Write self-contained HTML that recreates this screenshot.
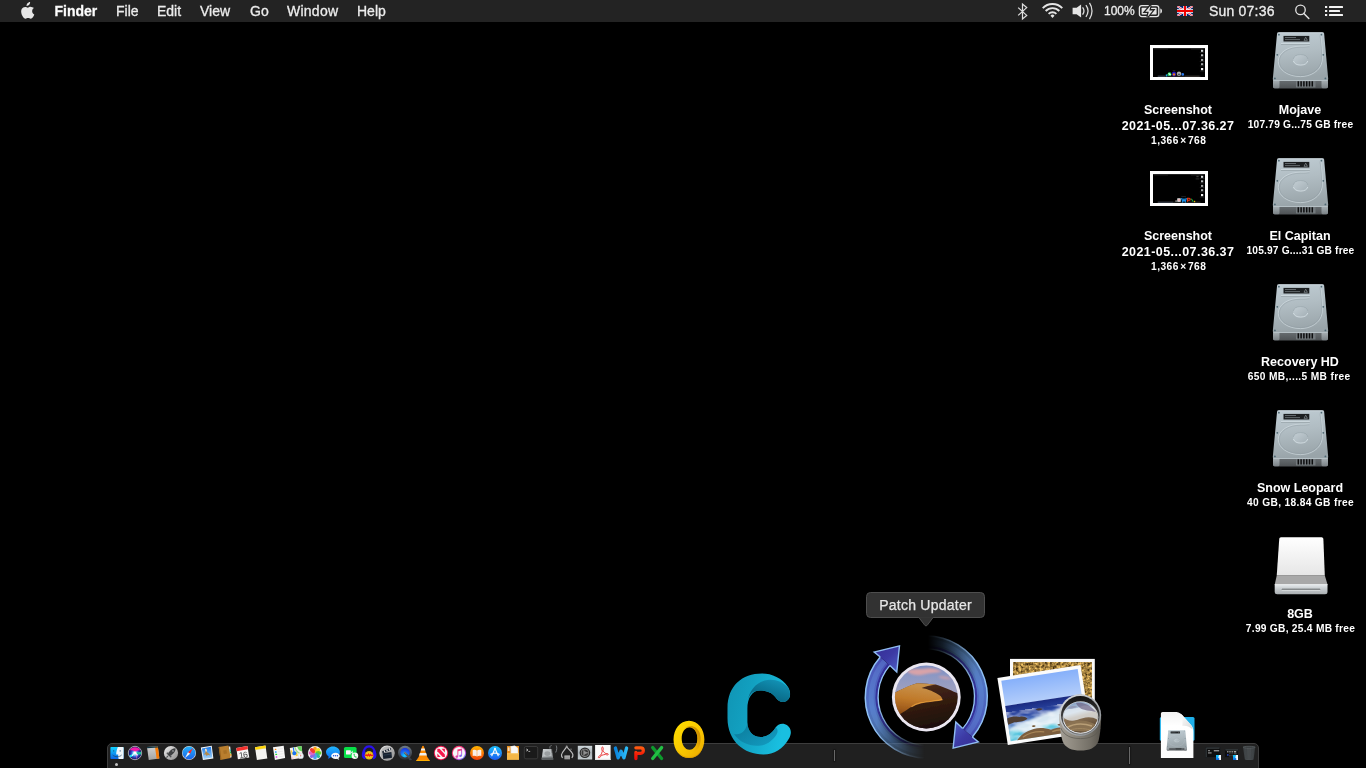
<!DOCTYPE html>
<html>
<head>
<meta charset="utf-8">
<title>Desktop</title>
<style>
*{margin:0;padding:0;box-sizing:border-box}
html,body{width:1366px;height:768px;overflow:hidden;background:#000}
body{position:relative;font-family:"Liberation Sans",sans-serif;color:#fff}
#root{position:absolute;left:0;top:0;width:1366px;height:768px;will-change:transform}
.abs{position:absolute}
#menubar{position:absolute;left:0;top:0;width:1366px;height:22px;background:#232323}
#menubar .mi{position:absolute;top:1px;height:22px;line-height:21px;font-size:14px;color:#ececec;white-space:nowrap;-webkit-text-stroke:0.300px #ececec}
#menubar .b{font-weight:bold}
.lbl{position:absolute;width:140px;text-align:center;font-weight:bold;color:#fff;white-space:nowrap}
.l1{font-size:12.5px;line-height:16px}
.l2{font-size:10.2px;line-height:14px}
.thumb{position:absolute;width:58px;height:35px;background:#000;border:3px solid #fff}
#dock{position:absolute;left:107px;top:743px;width:1152px;height:30px;background:#202020;border:1px solid #3d3d3d;border-radius:5px 5px 0 0}
.sep{position:absolute;width:1px;background:#686868;box-shadow:0 0 1px 1px #181818}
</style>
</head>
<body>
<div id="root">

<!-- ===== MENU BAR ===== -->
<div id="menubar">
  <svg class="abs" style="left:19.4px;top:1.8px" width="16.200" height="18" viewBox="0 0 15 16.800"><path fill="#e6e6e6" d="M10.3 0c.1 1-.3 1.9-.9 2.600-.6.700-1.500 1.200-2.400 1.100-.1-.900.400-1.900.900-2.500C8.500.500 9.500.050 10.300 0zM13.900 5.700c-.100.100-1.700 1-1.700 2.900 0 2.300 2 3 2 3.100 0 .050-.300 1.100-1 2.100-.600.900-1.300 1.800-2.300 1.800s-1.300-.600-2.400-.600c-1.200 0-1.500.600-2.500.650-1 .050-1.800-1-2.400-1.900C2.300 11.900 1.300 8.600 2.600 6.400c.600-1.100 1.800-1.800 3-1.800 1 0 1.900.650 2.500.650.600 0 1.700-.800 2.900-.700.500 0 1.900.200 2.900 1.150z"/></svg>
  <span class="mi b" style="left:54.500px;color:#fff">Finder</span>
  <span class="mi" style="left:116px">File</span>
  <span class="mi" style="left:157px">Edit</span>
  <span class="mi" style="left:200px">View</span>
  <span class="mi" style="left:250px">Go</span>
  <span class="mi" style="left:287px;letter-spacing:0.250px">Window</span>
  <span class="mi" style="left:357px">Help</span>
  <!-- bluetooth -->
  <svg class="abs" style="left:1014px;top:0" width="18" height="22" viewBox="0 0 18 22"><path fill="none" stroke="#dedede" stroke-width="1.25" stroke-linejoin="miter" d="M4.2 7.6L12.7 15.4L8.5 19V4L12.7 7.6L4.2 15.4"/></svg>
  <!-- wifi -->
  <svg class="abs" style="left:1040px;top:0" width="26" height="22" viewBox="0 0 26 22"><path fill="none" stroke="#e4e4e4" stroke-width="1.9" d="M2.72 8.15A13.6 13.6 0 0 1 22.28 8.15 M5.67 11.00A9.5 9.5 0 0 1 19.33 11.00 M8.62 13.85A5.4 5.4 0 0 1 16.38 13.85"/><path fill="#e4e4e4" d="M12.5 18.0L10.49 15.65A2.8 2.8 0 0 1 14.51 15.65Z"/></svg>
  <!-- volume -->
  <svg class="abs" style="left:1070px;top:0" width="26" height="22" viewBox="0 0 26 22"><path fill="#e4e4e4" d="M2.6 7.7H6.6L11.1 4.4V17.5L6.6 14.3H2.6Z"/><path fill="none" stroke="#dcdcdc" stroke-width="1.3" d="M12.57 7.43A5.8 5.8 0 0 1 12.57 14.57 M15.93 5.24A9.8 9.8 0 0 1 15.93 16.76 M19.47 2.97A14 14 0 0 1 19.47 19.03"/></svg>
  <span class="mi" style="left:1104px;font-size:12px;top:1px">100%</span>
  <!-- battery -->
  <svg class="abs" style="left:1137px;top:0" width="28" height="22" viewBox="0 0 28 22"><rect x="2.4" y="5.6" width="19.4" height="11" rx="2.4" fill="none" stroke="#e4e4e4" stroke-width="1.3"/><rect x="4.6" y="7.8" width="15" height="6.6" rx="0.6" fill="#e4e4e4"/><path fill="#e4e4e4" d="M23.3 8.6c1 .2 1.700 1.200 1.700 2.500s-.700 2.300-1.700 2.500z"/><path fill="#232323" stroke="#232323" stroke-width="2.6" stroke-linejoin="miter" d="M13.6 5.400L8.300 11.800H11.800L10.500 16.900L15.800 10.400H12.300Z"/><path fill="#e4e4e4" d="M13.6 5.400L8.300 11.800H11.800L10.500 16.900L15.800 10.400H12.300Z"/></svg>
  <!-- flag -->
  <svg class="abs" style="left:1177px;top:6px" width="16" height="10" viewBox="0 0 32 20"><rect width="32" height="20" fill="#012169"/><path d="M0 0L32 20M32 0L0 20" stroke="#fff" stroke-width="4.200"/><path d="M0 0L32 20M32 0L0 20" stroke="#e8112d" stroke-width="1.600"/><path d="M16 0V20M0 10H32" stroke="#fff" stroke-width="7"/><path d="M16 0V20M0 10H32" stroke="#f00000" stroke-width="4.200"/></svg>
  <span class="mi" style="left:1209px;letter-spacing:0.2px">Sun 07:36</span>
  <!-- spotlight -->
  <svg class="abs" style="left:1292px;top:0" width="20" height="22" viewBox="0 0 20 22"><circle cx="8.500" cy="9.900" r="4.750" fill="none" stroke="#e0e0e0" stroke-width="1.350"/><path d="M11.900 13.400L16.800 18.500" stroke="#e0e0e0" stroke-width="1.500" stroke-linecap="round"/></svg>
  <!-- notification center -->
  <svg class="abs" style="left:1322px;top:0" width="24" height="22" viewBox="0 0 24 22"><g fill="#f2f2f2"><rect x="3" y="6" width="2.200" height="2"/><rect x="3" y="10" width="2.200" height="2"/><rect x="3" y="14" width="2.200" height="2"/><rect x="7" y="6" width="14" height="2" rx=".5"/><rect x="7" y="10" width="11" height="2" rx=".5"/><rect x="7" y="14" width="14" height="2" rx=".5"/></g></svg>
</div>


<!-- ===== SVG SYMBOLS ===== -->
<svg width="0" height="0" style="position:absolute">
<defs>
  <linearGradient id="hg1" x1="0" y1="0" x2="0.150" y2="1"><stop offset="0" stop-color="#bfccd3"/><stop offset="0.450" stop-color="#b1bdc3"/><stop offset="1" stop-color="#99a4a9"/></linearGradient>
  <linearGradient id="hg2" x1="0" y1="0" x2="0" y2="1"><stop offset="0" stop-color="#6c7276"/><stop offset="1" stop-color="#4e5255"/></linearGradient>
  <linearGradient id="hg3" x1="0" y1="0" x2="0" y2="1"><stop offset="0" stop-color="#a9b1b5"/><stop offset="1" stop-color="#7b8286"/></linearGradient>
  <linearGradient id="hg4" x1="0" y1="0" x2="1" y2="1"><stop offset="0" stop-color="#c3ced4"/><stop offset="1" stop-color="#a3afb5"/></linearGradient>
  <linearGradient id="xg1" x1="0" y1="0" x2="0" y2="1"><stop offset="0" stop-color="#ffffff"/><stop offset="1" stop-color="#e6e6e6"/></linearGradient>
  <linearGradient id="xg2" x1="0" y1="0" x2="0" y2="1"><stop offset="0" stop-color="#e9edef"/><stop offset="0.500" stop-color="#c5cacd"/><stop offset="1" stop-color="#a9aeb1"/></linearGradient>
  <symbol id="hdd" viewBox="0 0 64 64">
    <path d="M5 51H60V58.600Q60 60.400 58.200 60.400H6.800Q5 60.400 5 58.600Z" fill="url(#hg2)"/>
    <rect x="5" y="52" width="6.500" height="8.200" rx="1.500" fill="url(#hg3)"/>
    <rect x="53.500" y="52" width="6.500" height="8.200" rx="1.500" fill="url(#hg3)"/>
    <rect x="28" y="53" width="19.500" height="6.400" fill="#747a7e"/>
    <path d="M30.300 53.300V58.600M33.100 53.300V58.600M35.900 53.300V58.600M38.700 53.300V58.600M41.500 53.300V58.600M44.300 53.300V58.600" stroke="#0d0e0f" stroke-width="1.500"/>
    <path d="M10.600 4.300H54.600Q56 4.300 56.150 5.700L60.200 51Q60.350 53 58.500 53H6.500Q4.650 53 4.800 51L9.050 5.700Q9.200 4.300 10.600 4.300Z" fill="url(#hg1)"/>
    <path d="M10.600 4.800H54.600" stroke="#d6e1e6" stroke-width="0.800" opacity="0.800"/>
    <path d="M5.200 52.500H59.800" stroke="#c5d0d5" stroke-width="0.900" opacity="0.700"/>
    <rect x="15.500" y="7.900" width="25.800" height="5.600" fill="#1c1f21"/>
    <path d="M17 9.500H28M17 11.600H32" stroke="#7f878b" stroke-width="0.700"/>
    <path d="M36 12.300L37.700 9.200L39.400 12.300Z" fill="none" stroke="#9aa2a6" stroke-width="0.600"/>
    <path d="M13 15.700H41.800" stroke="#d4dfe4" stroke-width="0.900"/>
    <path d="M13 16.500H41.800" stroke="#8e9aa0" stroke-width="0.600"/>
    <path d="M52.600 6.500C53.600 14 55 26 54.200 33C52.500 43.500 42 48.600 32.600 48.600C20 48.600 10.300 42 10.300 33.300C10.300 24.500 20 18.200 32.600 18.200C35.500 18.200 38.500 18.300 41.500 17.800" fill="none" stroke="#d3dee3" stroke-width="0.900" opacity="0.700"/>
    <path d="M52 7.500C53 15 54.200 26 53.400 32.500C51.700 42.500 41.500 47.600 32.600 47.600C20.700 47.600 11.300 41.500 11.300 33.300C11.300 25.200 20.700 19.200 32.600 19.200C35.500 19.200 38.500 19.200 41.500 18.700" fill="none" stroke="#8f9ba1" stroke-width="0.600" opacity="0.700"/>
    <ellipse cx="32.600" cy="31.900" rx="7.400" ry="5.300" fill="url(#hg4)"/>
    <path d="M25.400 33A7.400 5.300 0 0 0 39.800 33" fill="none" stroke="#d9e3e8" stroke-width="0.800"/>
    <path d="M25.300 31A7.400 5.300 0 0 1 39.900 31" fill="none" stroke="#93a0a6" stroke-width="0.500"/>
    <g fill="#4d6772"><circle cx="10.900" cy="6.700" r="0.900"/><circle cx="53.400" cy="6.700" r="0.900"/><circle cx="9.300" cy="26.800" r="0.900"/><circle cx="55.300" cy="26.800" r="0.900"/><circle cx="6.900" cy="50.400" r="0.900"/><circle cx="57.400" cy="50.400" r="0.900"/></g>
  </symbol>
  <symbol id="xdrv" viewBox="0 0 64 64">
    <path d="M6.700 52H59.500V59.800Q59.500 62.300 57 62.300H9.200Q6.700 62.300 6.700 59.800Z" fill="url(#xg2)"/>
    <path d="M14.200 57.300H51.800" stroke="#4f5355" stroke-width="1.100" stroke-linecap="round"/>
    <path d="M14.200 58.200H51.800" stroke="#f4f6f7" stroke-width="0.600" stroke-linecap="round"/>
    <path d="M8.800 43.300H56.750L59.500 52.500H6.750Z" fill="#a8a8a8"/>
    <path d="M13 5.200H53.600Q55.200 5.200 55.350 6.800L56.800 43.300H8.750L11.250 6.800Q11.400 5.200 13 5.200Z" fill="url(#xg1)"/>
    <path d="M6.900 52.600H59.300" stroke="#f2f4f5" stroke-width="0.800"/>
  </symbol>
</defs>
</svg>

<!-- ===== DESKTOP ICONS ===== -->
<svg class="abs" style="left:1268px;top:28px" width="64" height="64"><use href="#hdd"/></svg>
<svg class="abs" style="left:1268px;top:154px" width="64" height="64"><use href="#hdd"/></svg>
<svg class="abs" style="left:1268px;top:280px" width="64" height="64"><use href="#hdd"/></svg>
<svg class="abs" style="left:1268px;top:406px" width="64" height="64"><use href="#hdd"/></svg>
<svg class="abs" style="left:1268px;top:532px" width="64" height="64"><use href="#xdrv"/></svg>

<div class="thumb" style="left:1150px;top:45px"></div>
<svg class="abs" style="left:1153px;top:48px" width="52" height="29" viewBox="0 0 52 29"><rect width="52" height="0.900" fill="#262626"/><path d="M1 1H15M38 1H49" stroke="#3a3a3a" stroke-width="0.500"/><g fill="#d8dcde"><rect x="48" y="1.800" width="2.200" height="2"/><rect x="48" y="6.300" width="2.200" height="2" opacity="0.850"/><rect x="48" y="10.900" width="2.200" height="2" opacity="0.750"/><rect x="48" y="15.200" width="2.200" height="2" opacity="0.750"/><rect x="48" y="20" width="2.200" height="2.200" fill="#f4f4f4"/></g><g fill="#5a5a5a" opacity="0.700"><rect x="46.800" y="4.300" width="4.600" height="0.500"/><rect x="46.800" y="8.800" width="4.600" height="0.500"/><rect x="46.800" y="13.400" width="4.600" height="0.500"/><rect x="46.800" y="17.700" width="4.600" height="0.500"/><rect x="46.800" y="22.800" width="4.600" height="0.500"/></g><rect x="4.500" y="27.600" width="43" height="1.200" fill="#2a2a2a"/><path d="M5 28.200H12" stroke="#4a5a78" stroke-width="0.700" opacity="0.700"/><path d="M32 28.200H46" stroke="#5a4a3a" stroke-width="0.600" opacity="0.600"/><rect x="19.600" y="22.400" width="2.800" height="0.500" fill="#3a3a3a"/><rect x="12.800" y="26.400" width="1.600" height="2" fill="#1ea0e0"/><ellipse cx="16.500" cy="26.200" rx="1.900" ry="1.900" fill="#28d860"/><path d="M15.600 25.400L17.600 27" stroke="#eafff0" stroke-width="1.200"/><ellipse cx="21" cy="26" rx="2.100" ry="2.400" fill="#2418c0"/><circle cx="21" cy="26.400" r="1.200" fill="#f07818"/><circle cx="26" cy="25.800" r="2.300" fill="#9a9a9a"/><circle cx="26" cy="25.800" r="1.300" fill="#d8d8d8"/><rect x="25" y="25.600" width="2" height="1.200" fill="#2a3440"/><circle cx="29.800" cy="26.400" r="1.300" fill="#2a7af0"/></svg>
<div class="lbl l1" style="left:1108px;top:102px">Screenshot</div>
<div class="lbl l1" style="left:1108px;top:118px;letter-spacing:0.43px">2021-05...07.36.27</div>
<div class="lbl l2" style="left:1108.7px;top:133.5px;letter-spacing:0.45px">1,366<span style="margin:0 1.2px 0 1.5px">×</span>768</div>

<div class="thumb" style="left:1150px;top:171px"></div>
<svg class="abs" style="left:1153px;top:174px" width="52" height="29" viewBox="0 0 52 29"><rect width="52" height="0.900" fill="#262626"/><path d="M1 1H15M38 1H49" stroke="#3a3a3a" stroke-width="0.500"/><g fill="#d8dcde"><rect x="48" y="1.800" width="2.200" height="2"/><rect x="48" y="6.300" width="2.200" height="2" opacity="0.850"/><rect x="48" y="10.900" width="2.200" height="2" opacity="0.750"/><rect x="48" y="15.200" width="2.200" height="2" opacity="0.750"/><rect x="48" y="20" width="2.200" height="2.200" fill="#f4f4f4"/></g><g fill="#5a5a5a" opacity="0.700"><rect x="46.800" y="4.300" width="4.600" height="0.500"/><rect x="46.800" y="8.800" width="4.600" height="0.500"/><rect x="46.800" y="13.400" width="4.600" height="0.500"/><rect x="46.800" y="17.700" width="4.600" height="0.500"/><rect x="46.800" y="22.800" width="4.600" height="0.500"/></g><rect x="43.400" y="1.800" width="2.200" height="1.400" fill="#3a3a3a"/><rect x="42.600" y="4.400" width="3.600" height="1" fill="#3a3a3a" opacity="0.700"/><rect x="4.500" y="27.600" width="43" height="1.200" fill="#2a2a2a"/><path d="M5 28.200H20" stroke="#4a5a78" stroke-width="0.700" opacity="0.700"/><rect x="28.300" y="22.200" width="4.600" height="0.500" fill="#3a3a3a"/><rect x="22.400" y="26.200" width="1.400" height="1.800" fill="#8a8a8a"/><rect x="24.300" y="24.300" width="3.400" height="3.500" fill="#f2f2f2"/><path d="M25 26H27" stroke="#e84040" stroke-width="0.600"/><path d="M28.600 24L29.800 27.600L31 25.200L32.200 27.600L33.300 24" fill="none" stroke="#1890e8" stroke-width="1.300"/><path d="M34.600 27.800V24.300H36.200C37.600 24.300 37.600 26.200 36.200 26.200H35" fill="none" stroke="#f03814" stroke-width="1.100"/><path d="M38.300 24.800L40.300 27.800" stroke="#18b040" stroke-width="1.100"/><rect x="41" y="26.800" width="1.200" height="1.400" fill="#e8b800"/></svg>
<div class="lbl l1" style="left:1108px;top:228px">Screenshot</div>
<div class="lbl l1" style="left:1108px;top:244px;letter-spacing:0.43px">2021-05...07.36.37</div>
<div class="lbl l2" style="left:1108.7px;top:259.5px;letter-spacing:0.45px">1,366<span style="margin:0 1.2px 0 1.5px">×</span>768</div>

<div class="lbl l1" style="left:1230px;top:102px">Mojave</div>
<div class="lbl l2" style="left:1230.5px;top:117.5px;letter-spacing:0.2px">107.79 G...75 GB free</div>
<div class="lbl l1" style="left:1230px;top:228px">El Capitan</div>
<div class="lbl l2" style="left:1230.5px;top:243.5px;letter-spacing:0.17px">105.97 G....31 GB free</div>
<div class="lbl l1" style="left:1230px;top:354px">Recovery HD</div>
<div class="lbl l2" style="left:1229.2px;top:369.5px;letter-spacing:0.36px">650 MB,....5 MB free</div>
<div class="lbl l1" style="left:1230px;top:480px">Snow Leopard</div>
<div class="lbl l2" style="left:1230.5px;top:495.5px;letter-spacing:0.34px">40 GB, 18.84 GB free</div>
<div class="lbl l1" style="left:1230px;top:606px">8GB</div>
<div class="lbl l2" style="left:1230.5px;top:621.5px;letter-spacing:0.27px">7.99 GB, 25.4 MB free</div>

<!-- ===== DOCK ===== -->
<div id="dock"></div>
<div class="sep" style="left:834px;top:750px;height:11px"></div>
<div class="sep" style="left:1129px;top:747px;height:17px"></div>
<!-- ===== DOCK ICONS (small) ===== -->
<svg width="0" height="0" style="position:absolute"><defs>
  <linearGradient id="gFn" x1="0" y1="0" x2="0" y2="1"><stop offset="0" stop-color="#12d2ff"/><stop offset="1" stop-color="#0a63e6"/></linearGradient>
  <radialGradient id="gSiri" cx="0.500" cy="0.520" r="0.520"><stop offset="0" stop-color="#ffffff"/><stop offset="0.220" stop-color="#9af4ff"/><stop offset="0.500" stop-color="#3458d8"/><stop offset="0.850" stop-color="#141470"/><stop offset="1" stop-color="#0a0a40"/></radialGradient>
  <linearGradient id="gSilv" x1="0" y1="0" x2="1" y2="1"><stop offset="0" stop-color="#f0f0f0"/><stop offset="1" stop-color="#8c8c8c"/></linearGradient>
  <linearGradient id="gSaf" x1="0" y1="0" x2="0" y2="1"><stop offset="0" stop-color="#25b2fb"/><stop offset="1" stop-color="#1a62ea"/></linearGradient>
  <linearGradient id="gSky" x1="0" y1="0" x2="0" y2="1"><stop offset="0" stop-color="#1878ea"/><stop offset="1" stop-color="#a8d6fa"/></linearGradient>
  <linearGradient id="gMsg" x1="0" y1="0" x2="0" y2="1"><stop offset="0" stop-color="#22b8ff"/><stop offset="1" stop-color="#0a6cf0"/></linearGradient>
  <linearGradient id="gGrey" x1="0" y1="0" x2="0" y2="1"><stop offset="0" stop-color="#d2d2d2"/><stop offset="1" stop-color="#a4a4a4"/></linearGradient>
</defs></svg>
<style>.di{position:absolute;top:745px;width:16px;height:16px;overflow:visible}</style>

<!-- 1 Finder -->
<svg class="di" style="left:109px" viewBox="0 0 16 16"><rect x="1.400" y="2" width="13.200" height="12" rx="0.700" fill="url(#gFn)"/><path d="M8.900 2H13.900Q14.600 2 14.600 2.700V13.300Q14.600 14 13.900 14H9.600C9.200 12.300 9.100 10.800 9.200 9.400H7.200C7.300 6.600 7.900 4.200 8.900 2Z" fill="#f1f6fb"/><path d="M4.700 5.200V6.600M11.200 5.200V6.600" stroke="#234a73" stroke-width="0.800"/><path d="M3.600 10C6 12.300 10.400 12.300 12.600 10" stroke="#1d3f63" stroke-width="0.700" fill="none"/></svg>
<div class="abs" style="left:115px;top:763px;width:3px;height:3px;border-radius:2px;background:#c4c4c4"></div>
<!-- 2 Siri -->
<svg class="di" style="left:127px" viewBox="0 0 16 16"><defs><filter id="fB" x="-0.300" y="-0.300" width="1.600" height="1.600"><feGaussianBlur stdDeviation="0.550"/></filter><clipPath id="cSi"><circle cx="8" cy="8" r="6.500"/></clipPath></defs><circle cx="8" cy="8" r="7" fill="#0a0a3c"/><circle cx="8" cy="8" r="6.600" fill="url(#gSiri)"/><g clip-path="url(#cSi)"><g filter="url(#fB)"><path d="M2.500 5.500C4.500 1 11.500 1 13.500 5.500C11.500 4.800 9.500 5.800 8.200 7.600C6.800 5.600 4.800 4.800 2.500 5.500Z" fill="#f01aa8"/><path d="M1.800 10.500C4 9.800 6 8.800 8 7.700C6.800 10.500 4.500 12.500 2.800 12.200Z" fill="#19dcee"/><path d="M14.200 6.800C12 7 10 7.400 8.300 7.800C10 9.400 12.800 10 14.200 9.200Z" fill="#16c096"/><path d="M8.200 8C9.200 10 9.800 12 9.500 14.200C10.800 12 10.300 9.800 8.200 8Z" fill="#f468c8"/><path d="M5 10.800L8 7.200L10.600 10.400" stroke="#ffffff" stroke-width="1.100" fill="none" opacity="0.900"/><circle cx="8" cy="7.800" r="1.300" fill="#fff"/></g></g><circle cx="8" cy="8" r="6.700" fill="none" stroke="#c4c4c4" stroke-width="0.800"/></svg>
<!-- 3 grey page w/ orange -->
<svg class="di" style="left:145px" viewBox="0 0 16 16"><path d="M2 2L12.800 1.200L14.400 13.400L3.750 14.900Z" fill="url(#gGrey)"/><path d="M10 1.400L12.800 1.200L14.400 13.400L11.600 13.800Z" fill="#f87c08"/><path d="M2 2L12.800 1.200L12.950 2.400L2.150 3.200Z" fill="#0d3442"/></svg>
<!-- 4 Launchpad -->
<svg class="di" style="left:163px" viewBox="0 0 16 16"><circle cx="8" cy="8" r="7.100" fill="url(#gSilv)"/><path d="M12.600 3.200C9.800 3.300 7 5 5.500 8L4.400 9.400L6.500 11.500L7.900 10.400C10.900 8.900 12.600 6.100 12.600 3.200Z" fill="#3e4042"/><path d="M5.600 7.200L3.200 7.900L4.500 9.300ZM8.700 10.400L8 12.800L6.600 11.500Z" fill="#46484a"/><path d="M5 11L3.400 12.600" stroke="#505254" stroke-width="1.100"/><circle cx="10" cy="5.900" r="0.900" fill="#8e9092"/></svg>
<!-- 5 Safari -->
<svg class="di" style="left:181px" viewBox="0 0 16 16"><circle cx="8" cy="8" r="7" fill="#dcdcdc"/><circle cx="8" cy="8" r="6.500" fill="url(#gSaf)"/><path d="M12 3.100L9.050 8.850L6.950 7.150Z" fill="#ff2222"/><path d="M4 12.900L9.050 8.850L6.950 7.150Z" fill="#f6f6f6"/></svg>
<!-- 6 Mail -->
<svg class="di" style="left:199px" viewBox="0 0 16 16"><path d="M1.840 2.560L12.700 0.630L14.400 13.400L3.900 15Z" fill="#f2f6fa"/><path d="M2.900 3.400L11.900 1.800L13.300 12.600L4.700 13.900Z" fill="url(#gSky)"/><path d="M6.300 3.800C7.200 3.500 7.800 4.200 7.800 5.200L8.300 7.500C9.500 8 10.500 9 11.300 10.500L8.800 9.800L7.800 11.200L6.800 9.500C5.800 9.800 5 9.500 4.700 9C5.800 8.800 6.500 8 6.500 7L6.200 5.300C5.800 4.800 5.800 4.200 6.300 3.800Z" fill="#b58a48"/><path d="M6.300 3.800C7.200 3.500 7.800 4.200 7.800 5.200L8 6.500L6.400 6.500L6.200 5.300C5.800 4.800 5.800 4.200 6.300 3.800Z" fill="#efe6d0"/></svg>
<!-- 7 Contacts -->
<svg class="di" style="left:217px" viewBox="0 0 16 16"><path d="M11.400 1.500L13.200 1.400L14.600 12.300L13 12.800Z" fill="#ececec"/><path d="M12.500 4.300L13.700 4.200L14 6.300L12.800 6.400Z" fill="#20a6a0"/><path d="M12.800 6.500L14 6.400L14.300 8.500L13.100 8.600Z" fill="#34b44c"/><path d="M13.100 8.800L14.300 8.700L14.600 10.800L13.400 10.900Z" fill="#f0a21c"/><path d="M1.700 2L11.400 0.500L13.600 12.900L3.500 14.900Z" fill="#b97e2e"/><path d="M1.700 2L2.700 1.850L4.500 14.700L3.500 14.900Z" fill="#96601c"/><path d="M6.200 5.500L9.400 5L10 8.600L6.800 9.100Z" fill="#a87024"/></svg>
<!-- 8 Calendar -->
<svg class="di" style="left:235px" viewBox="0 0 16 16"><path d="M1.300 2.900L12.400 1L14.300 12.500L2.900 14.300Z" fill="#f6f6f6"/><path d="M1.300 2.900L12.400 1L12.950 4.300L1.800 6.200Z" fill="#f2302c"/><text x="8.100" y="12.900" font-family="Liberation Sans, sans-serif" font-size="8.600" fill="#444" text-anchor="middle" transform="rotate(-9 8.300 10)" letter-spacing="-0.800">16</text></svg>
<!-- 9 Notes -->
<svg class="di" style="left:253px" viewBox="0 0 16 16"><path d="M2 2.300L12.500 0.600L14.300 13.400L3.900 14.900Z" fill="#f3f3f1"/><path d="M2 2.300L12.500 0.600L12.850 3L2.350 4.700Z" fill="#ffd60a"/><path d="M2.350 4.700L12.850 3L12.900 3.400L2.400 5.100Z" fill="#d8b400" opacity="0.600"/></svg>
<!-- 10 Reminders -->
<svg class="di" style="left:271px" viewBox="0 0 16 16"><path d="M1.960 2.150L12.700 0.800L14.100 13.100L3.900 14.900Z" fill="#f7f7f7"/><rect x="3.700" y="3.700" width="1.700" height="1.300" rx="0.500" fill="#ff8a14"/><rect x="4" y="6.200" width="1.600" height="1.500" rx="0.500" fill="#1a9cf8"/><rect x="4.300" y="8.800" width="1.900" height="1.300" rx="0.500" fill="#22d432"/><rect x="4.700" y="11.200" width="1.600" height="1.500" rx="0.500" fill="#e040f0"/><path d="M6.800 4.200L11.800 3.600M7.100 6.800L12.100 6.200M7.400 9.300L12.400 8.700M7.700 11.800L12.700 11.200" stroke="#dedede" stroke-width="0.500"/></svg>
<!-- 11 Maps -->
<svg class="di" style="left:289px" viewBox="0 0 16 16"><path d="M0.800 2.900L12.500 1.100L14 12.800L2.500 14.600Z" fill="#f5eee9"/><path d="M2.200 10.500L5 13.800L3 14.300Z" fill="#f4c0c8" opacity="0.700"/><path d="M8.200 1.800L12.500 1.100L13.200 6.500C11 6.300 9 4.800 8.200 1.800Z" fill="#63d65a"/><path d="M6.500 2.100C7 5 8.800 7.300 12 8.200L12.200 9.500C8.500 8.800 6 6 5.500 2.300Z" fill="#7ed873" opacity="0.800"/><path d="M1.700 5.500L2.900 5.300L4 9.500L2.700 9.800Z" fill="#f7d334"/><path d="M6 7.500L8.200 7.200L8.800 10.800L6.800 11.200Z" fill="#f7d334"/><path d="M3.800 2.600L4.900 2.400L5.400 6.200C6.800 6.400 7.600 7.400 7.400 8.600C7.200 9.800 6 10.500 4.900 10.200C3.700 9.900 3.100 8.800 3.400 7.700C3.500 7.100 3.900 6.600 4.400 6.400Z" fill="#1874f2"/><circle cx="11.800" cy="10.900" r="2.900" fill="#dfe7ee"/><circle cx="11.800" cy="10.900" r="2" fill="#f6f8fa"/><path d="M11.800 9.300L12.300 10.900H11.300Z" fill="#e43a3a"/><path d="M11.800 12.500L12.300 10.900H11.300Z" fill="#a8b0b8"/></svg>
<!-- 12 Photos -->
<svg class="di" style="left:307px" viewBox="0 0 16 16"><circle cx="8" cy="8" r="7.100" fill="#f5f5f5"/><g opacity="0.920"><ellipse cx="8" cy="4.500" rx="1.900" ry="3" fill="#ff9a0a"/><ellipse cx="8" cy="4.500" rx="1.900" ry="3" fill="#f4dc10" transform="rotate(45 8 8)"/><ellipse cx="8" cy="4.500" rx="1.900" ry="3" fill="#5cc820" transform="rotate(90 8 8)"/><ellipse cx="8" cy="4.500" rx="1.900" ry="3" fill="#22b890" transform="rotate(135 8 8)"/><ellipse cx="8" cy="4.500" rx="1.900" ry="3" fill="#3a9cf0" transform="rotate(180 8 8)"/><ellipse cx="8" cy="4.500" rx="1.900" ry="3" fill="#8a5ce0" transform="rotate(225 8 8)"/><ellipse cx="8" cy="4.500" rx="1.900" ry="3" fill="#e05cc0" transform="rotate(270 8 8)"/><ellipse cx="8" cy="4.500" rx="1.900" ry="3" fill="#f42a24" transform="rotate(315 8 8)"/></g></svg>
<!-- 13 Messages -->
<svg class="di" style="left:325px" viewBox="0 0 16 16"><path d="M8 1.400C11.900 1.400 14.900 3.900 14.900 7C14.900 10.100 11.900 12.600 8 12.600C7.100 12.600 6.300 12.500 5.600 12.300C4.900 13.100 3.800 13.700 2.800 13.800C3.400 13.100 3.700 12.200 3.600 11.400C2 10.400 1 8.800 1 7C1 3.900 4.100 1.400 8 1.400Z" fill="url(#gMsg)"/><path d="M10.500 7.700C12.900 7.700 14.800 9.100 14.800 10.800C14.800 11.700 14.300 12.500 13.500 13.100C13.500 13.700 13.800 14.300 14.300 14.700C13.500 14.700 12.700 14.400 12.100 13.800C11.600 13.900 11.100 14 10.500 14C8.100 14 6.200 12.600 6.200 10.800C6.200 9.100 8.100 7.700 10.500 7.700Z" fill="#f7f9fb"/><circle cx="8.600" cy="10.800" r="0.700" fill="#1c50d8"/><circle cx="10.500" cy="10.800" r="0.700" fill="#1c50d8"/><circle cx="12.400" cy="10.800" r="0.700" fill="#1c50d8"/></svg>
<!-- 14 FaceTime -->
<svg class="di" style="left:343px" viewBox="0 0 16 16"><rect x="0.960" y="2" width="12.600" height="11.100" rx="1.600" fill="#08e048"/><rect x="3" y="5.200" width="4.800" height="4.400" rx="0.600" fill="#fbeefb"/><path d="M7.900 7.400L9.700 5.600V9.300Z" fill="#fbeefb"/><circle cx="11.900" cy="10.700" r="3.300" fill="#f6f8f6"/><path d="M10.600 8.800C10.300 10.600 11.500 12.300 13.300 12.700L13.700 11.800L12.700 11.200L12.300 11.500C11.800 11.200 11.500 10.700 11.400 10.100L11.800 9.800L11.500 8.700Z" fill="#10c840"/></svg>
<!-- 15 Audacity -->
<svg class="di" style="left:361px" viewBox="0 0 16 16"><path d="M2.400 9C2.400 4.200 4.800 1.300 8.100 1.300C11.400 1.300 13.900 4.200 13.900 9" fill="none" stroke="#2a10ee" stroke-width="2.200"/><path d="M4.200 5.600C1.600 5.900 0.500 8.200 0.900 10.700C1.300 13 2.800 14.600 4.600 14.300Z" fill="#2a10ee"/><path d="M12.100 5.600C14.700 5.900 15.800 8.200 15.400 10.700C15 13 13.500 14.600 11.700 14.300Z" fill="#2a10ee"/><circle cx="8.100" cy="10.200" r="4.300" fill="#e9bc14"/><circle cx="8.100" cy="10.200" r="3" fill="#f2d21c" opacity="0.700"/><path d="M4 10.300L5.500 10L6.500 10.800L7.500 9.300L8.500 10.900L9.500 9.500L10.500 10.600L12.200 10.200" fill="none" stroke="#f01818" stroke-width="1.300"/></svg>
<!-- 16 Clapper -->
<svg class="di" style="left:379px" viewBox="0 0 16 16"><circle cx="8.100" cy="8.100" r="7.700" fill="url(#gSilv)"/><circle cx="8.100" cy="8.100" r="6.600" fill="#9a9a9a" opacity="0.500"/><path d="M3.600 8.200L12.400 6.900L13 12.700L4.300 13.900Z" fill="#17212e"/><path d="M3 6.400L11.500 2.800L12.200 4.800L3.700 8.300Z" fill="#1b2532"/><path d="M4.600 5.700L5.800 5.200L6.400 7.100L5.200 7.600ZM7.100 4.650L8.300 4.150L8.900 6.100L7.700 6.600ZM9.600 3.600L10.800 3.100L11.400 5L10.200 5.500Z" fill="#e6e6e6"/><path d="M4.500 10.200L12.300 9.100" stroke="#33465c" stroke-width="0.600"/></svg>
<svg width="0" height="0" style="position:absolute"><defs>
  <radialGradient id="gQT" cx="0.450" cy="0.800" r="0.800"><stop offset="0" stop-color="#10d4ff"/><stop offset="0.500" stop-color="#1a70f4"/><stop offset="1" stop-color="#1a30e0"/></radialGradient>
  <linearGradient id="gQTr" x1="0" y1="0" x2="0" y2="1"><stop offset="0" stop-color="#6e7a88"/><stop offset="1" stop-color="#2a2e34"/></linearGradient>
  <linearGradient id="gTun" x1="0" y1="0" x2="1" y2="1"><stop offset="0" stop-color="#fd3a5e"/><stop offset="0.450" stop-color="#f53c88"/><stop offset="0.720" stop-color="#b450e8"/><stop offset="1" stop-color="#20c4f8"/></linearGradient>
  <linearGradient id="gBk" x1="0" y1="0" x2="0" y2="1"><stop offset="0" stop-color="#ffb400"/><stop offset="0.550" stop-color="#fa7808"/><stop offset="1" stop-color="#ee3c08"/></linearGradient>
  <linearGradient id="gAS" x1="0" y1="0" x2="0" y2="1"><stop offset="0" stop-color="#1cc0fe"/><stop offset="1" stop-color="#1a5cf0"/></linearGradient>
  <linearGradient id="gW" x1="0" y1="0" x2="1" y2="0"><stop offset="0" stop-color="#0a84dc"/><stop offset="1" stop-color="#2cbcf8"/></linearGradient>
  <linearGradient id="gP" x1="0" y1="0" x2="0" y2="1"><stop offset="0" stop-color="#ff5a10"/><stop offset="0.500" stop-color="#f82408"/><stop offset="1" stop-color="#ee0c08"/></linearGradient>
  <linearGradient id="gX" x1="0" y1="0" x2="1" y2="1"><stop offset="0" stop-color="#0c9a2c"/><stop offset="1" stop-color="#34d654"/></linearGradient>
  <linearGradient id="gBox" x1="0" y1="0" x2="0" y2="1"><stop offset="0" stop-color="#cdd6da"/><stop offset="0.500" stop-color="#a9b1b5"/><stop offset="1" stop-color="#c4cbce"/></linearGradient>
  <linearGradient id="gDU" x1="0" y1="0" x2="1" y2="1"><stop offset="0" stop-color="#d4d8da"/><stop offset="1" stop-color="#7c8082"/></linearGradient>
  <linearGradient id="gO" x1="0" y1="0" x2="1" y2="1"><stop offset="0" stop-color="#ffe000"/><stop offset="0.600" stop-color="#f8c400"/><stop offset="1" stop-color="#e8a600"/></linearGradient>
  <linearGradient id="gO2" x1="1" y1="0" x2="0" y2="1"><stop offset="0" stop-color="#a86800"/><stop offset="0.500" stop-color="#e8a800"/><stop offset="1" stop-color="#ffd800"/></linearGradient>
</defs></svg>
<!-- 17 QuickTime -->
<svg class="di" style="left:397px" viewBox="0 0 16 16"><path d="M9 9L13 12.600L15.200 15L12.600 15.200L8 10.500Z" fill="#3a4048"/><circle cx="8" cy="7.800" r="7" fill="url(#gQTr)"/><circle cx="8" cy="7.800" r="4.700" fill="url(#gQT)"/><path d="M7.600 7.600L12.500 12.500" stroke="#4a525c" stroke-width="2"/><path d="M7.400 7.200L9.600 9.400" stroke="#8a7a78" stroke-width="1.200"/></svg>
<!-- 18 VLC -->
<svg class="di" style="left:415px" viewBox="0 0 16 16"><path d="M7.200 1.200Q8 0.300 8.800 1.200L12.600 13H3.400Z" fill="#ff8a00"/><path d="M6.350 3.600H9.650L10.300 5.600H5.700Z" fill="#f0f0f0"/><path d="M4.900 8.100H11.100L11.900 10.600H4.100Z" fill="#f0f0f0"/><path d="M3.300 12.500H12.700L14.700 15.400Q14.900 16 14.200 16H1.800Q1.100 16 1.300 15.400Z" fill="#fc8c04"/><path d="M1.800 15H14.200L14.700 15.600Q14.900 16 14.200 16H1.800Q1.100 16 1.300 15.600Z" fill="#ffb000"/></svg>
<!-- 19 News -->
<svg class="di" style="left:433px" viewBox="0 0 16 16"><circle cx="8" cy="8" r="7.200" fill="#f2124c"/><circle cx="8" cy="8" r="6.200" fill="#f4f6f6"/><path d="M4.300 3.800H6.500L11.900 9.600V12H9.700L4.300 6.200Z" fill="#f4184c"/><path d="M8.600 3.800H11.900V7.400Z" fill="#f4184c"/><path d="M4.300 8.400L7.600 12H4.300Z" fill="#f4184c"/></svg>
<!-- 20 iTunes -->
<svg class="di" style="left:451px" viewBox="0 0 16 16"><circle cx="8" cy="8" r="7.200" fill="url(#gTun)"/><circle cx="8" cy="8" r="6.100" fill="#f8f8fa"/><path d="M6.400 4.600L11.100 3.500V10.300C11.100 11.300 10.300 11.900 9.400 11.900C8.700 11.900 8.200 11.500 8.200 10.900C8.200 10.200 8.800 9.700 9.600 9.700C9.800 9.700 10 9.700 10.200 9.800V5.500L7.300 6.200V11.200C7.300 12.200 6.500 12.800 5.600 12.800C4.900 12.800 4.400 12.400 4.400 11.800C4.400 11.100 5 10.600 5.800 10.600C6 10.600 6.200 10.600 6.400 10.700Z" fill="url(#gTun)"/></svg>
<!-- 21 Books -->
<svg class="di" style="left:469px" viewBox="0 0 16 16"><circle cx="8" cy="8" r="7" fill="url(#gBk)"/><path d="M3.700 5.200C5.100 4.600 6.700 4.700 7.800 5.500V11.400C6.700 10.700 5.100 10.600 3.700 11.100Z" fill="#f8eee8"/><path d="M12.300 5.200C10.900 4.600 9.300 4.700 8.200 5.500V11.400C9.300 10.700 10.900 10.600 12.300 11.100Z" fill="#f8eee8"/></svg>
<!-- 22 App Store -->
<svg class="di" style="left:487px" viewBox="0 0 16 16"><circle cx="8" cy="8" r="7" fill="url(#gAS)"/><path d="M8 3.600L4.800 10.700M8 3.600L11.200 10.700M3.800 9.300C6.500 7.700 9.500 7.700 12.200 9.300" fill="none" stroke="#f2f6fa" stroke-width="1.200" stroke-linecap="round"/><circle cx="8" cy="3.700" r="0.900" fill="#f2f6fa"/></svg>
<!-- 23 Folder w/ docs -->
<svg class="di" style="left:505px" viewBox="0 0 16 16"><path d="M2 1H14V9H2Z" fill="#e88e1c"/><path d="M2.800 2.400H4.600V6H2.800Z" fill="#f4dcc0"/><path d="M5.400 1.200L9.800 0.500L13 3L13.300 9.200H5.700Z" fill="#e4e4e4"/><path d="M6.200 1.700L9.600 1.100L12.200 3.200L12.500 9H6.500Z" fill="#f8f8f8"/><path d="M2 8.400H14V14.900H2Z" fill="#f4b748"/><path d="M2 8.400H14V9.200H2Z" fill="#f8c868"/></svg>
<!-- 24 Terminal -->
<svg class="di" style="left:523px" viewBox="0 0 16 16"><rect x="1.300" y="1.500" width="13.400" height="12.300" rx="1.600" fill="#1a1a1a" stroke="#3c3c3c" stroke-width="0.900"/><path d="M3.300 4L5 5L3.300 6" fill="none" stroke="#e0e0e0" stroke-width="0.800"/><path d="M5.400 6.400H7.200" stroke="#e0e0e0" stroke-width="0.700"/></svg>
<!-- 25 Disk Utility -->
<svg class="di" style="left:541px" viewBox="0 0 16 16"><path d="M2 4H10.800L12.300 14.600H0.600Z" fill="url(#gDU)"/><path d="M3 5.200H9.800L10.600 11H2.200Z" fill="#c6cacc" opacity="0.700"/><ellipse cx="6.400" cy="8.600" rx="3" ry="2.300" fill="#9a9ea0"/><path d="M1 12.500H12L12.300 14.600H0.600Z" fill="#5c6062"/><path d="M9 3.600C8.500 1.500 9.500 0.400 10.500 0.500M15.200 0.500C16 2 16 5 14.700 7.500" fill="none" stroke="#8c9094" stroke-width="0.800"/><path d="M10.800 4L11.300 8" stroke="#3c3c3c" stroke-width="0.800"/></svg>
<!-- 26 Calipers -->
<svg class="di" style="left:559px" viewBox="0 0 16 16"><path d="M7.700 1.800C6 4.500 2.800 7 2.500 9.800C2.400 11 3 12.200 3.600 12.800M7.700 1.800C9.400 4.500 13.600 7 13.900 9.800C14 11 13.400 12.200 12.800 12.800" fill="none" stroke="#bcbcbc" stroke-width="1.200"/><circle cx="7.700" cy="1.500" r="1" fill="#9a9a9a"/><rect x="5.400" y="10.200" width="5.600" height="4.200" fill="#8c8c8c"/><path d="M5.400 11.600H11M5.400 13H11" stroke="#bdbdbd" stroke-width="0.600"/><path d="M11 4.200H13" stroke="#8a8a8a" stroke-width="0.700"/></svg>
<!-- 27 grey box w/ circle -->
<svg class="di" style="left:577px" viewBox="0 0 16 16"><rect x="0.800" y="0.800" width="14.400" height="13.700" fill="url(#gBox)"/><circle cx="7.900" cy="7.800" r="5.300" fill="#2b2b2b"/><circle cx="7.900" cy="7.800" r="4.100" fill="#8c8c8c"/><circle cx="7.900" cy="7.800" r="3.300" fill="#3a3a3a"/><path d="M6.800 5.600L10.600 7.800L6.800 10Z" fill="#8a8a8a"/><path d="M6.800 5L6.800 10.600M6.800 7.800H11.200" stroke="#9a9a9a" stroke-width="0.700"/></svg>
<!-- 28 Acrobat -->
<svg class="di" style="left:595px" viewBox="0 0 16 16"><rect x="0.100" y="0" width="15.500" height="15" fill="#fbfbfb"/><rect x="0.100" y="13.800" width="15.500" height="1.200" fill="#e4e4e4"/><path d="M7.400 2C8.400 2 8.400 3.800 8 5.800C8.800 7.300 10 8.300 11 8.600C12.300 8.400 13.400 8.600 13.300 9.400C13.200 10.200 11.800 10 10.600 9.400C9.400 9.500 7.800 9.900 6.500 10.400C5.500 12 4.300 13 3.500 12.600C2.800 12.100 4 10.900 5.800 10.100C6.400 9 7 7.500 7.300 6.200C6.600 4.400 6.500 2 7.400 2Z" fill="none" stroke="#e62a2a" stroke-width="0.900"/></svg>
<!-- 29 Word -->
<svg class="abs" style="left:613px;top:745px;overflow:visible" width="16" height="16" viewBox="0 0 16 16"><path d="M2.400 3L5.100 12.800L8 6.200L10.900 12.800L13.600 3" fill="none" stroke="url(#gW)" stroke-width="3.300" stroke-linecap="round" stroke-linejoin="round"/></svg>
<!-- 30 PowerPoint -->
<svg class="abs" style="left:631px;top:745px;overflow:visible" width="16" height="16" viewBox="0 0 16 16"><path d="M4.900 13.600V7.400M4.900 2.800H9.600C13.200 2.800 13.200 8.400 9.600 8.400H7" fill="none" stroke="url(#gP)" stroke-width="3.300" stroke-linecap="round" stroke-linejoin="round"/></svg>
<!-- 31 Excel -->
<svg class="abs" style="left:649px;top:745px;overflow:visible" width="16" height="16" viewBox="0 0 16 16"><path d="M3.700 2.600L12.600 13.500" fill="none" stroke="#0c9a2c" stroke-width="3.300" stroke-linecap="round"/><path d="M12.600 2.600L3.700 13.500" fill="none" stroke="#22c044" stroke-width="3.300" stroke-linecap="round"/></svg>
<!-- 32 Outlook O -->
<svg class="abs" style="left:672px;top:719px;overflow:visible" width="34" height="41" viewBox="0 0 34 41"><path fill-rule="evenodd" fill="url(#gO)" d="M17 1.700C26 1.700 32.400 10 32.400 20.400C32.400 30.800 26 39.100 17 39.100C8 39.100 1.500 30.800 1.500 20.400C1.500 10 8 1.700 17 1.700ZM17.500 8.300C13 8.300 9.700 13.300 9.700 19.500C9.700 25.700 13 30.800 17.500 30.800C22 30.800 25.400 25.700 25.400 19.500C25.400 13.300 22 8.300 17.500 8.300Z"/><path d="M12 10.300C16 5 24.500 6 27.700 14C29.500 19 28.800 25 26.500 29C24.300 32.500 21 34.500 17.500 34C22.500 32.500 25.400 26 25.400 19.500C25.400 13.300 22 8.300 17.500 8.300C15.300 8.300 13.400 9 12 10.300Z" fill="url(#gO2)" opacity="0.750"/><path d="M4 28C6 34 11 38 17 38C23 38 27.500 34.500 30 29.500C28.500 36 23.500 39.100 17 39.100C11 39.100 6 35 4 28Z" fill="#d89400" opacity="0.600"/></svg>
<!-- 33 Communicator C -->
<svg class="abs" style="left:720px;top:666px;overflow:visible" width="80" height="96" viewBox="0 0 80 96">
  <defs>
    <linearGradient id="gC1" x1="0" y1="0" x2="1" y2="0.300"><stop offset="0" stop-color="#1094b4"/><stop offset="0.400" stop-color="#12a0c0"/><stop offset="1" stop-color="#19bfe0"/></linearGradient>
    <linearGradient id="gC2" x1="0.200" y1="1" x2="0.800" y2="0"><stop offset="0" stop-color="#075b75"/><stop offset="0.550" stop-color="#0c7a9a"/><stop offset="1" stop-color="#1394b8"/></linearGradient>
    <linearGradient id="gC3" x1="0" y1="0" x2="1" y2="1"><stop offset="0" stop-color="#0a7392"/><stop offset="1" stop-color="#1298be"/></linearGradient>
  </defs>
  <path d="M42 7.500C52 7.500 62 12 68 21C71 26 71 32 66.500 35C62.500 37.500 58 35 55.500 31.200C52 26.500 46 24.400 40 24.400C32 24.400 27.400 32 27.400 42.700L27.400 56.200C27.400 65 33 71.100 40.700 71.100C47 71.100 52.500 67 55.600 61.600C58 57.500 63.500 56.500 67.500 59.500C71.500 62.500 71.800 68 69 72.500C63 83 54 88.400 43.400 88.400C24 88.400 7.500 75 7.500 52.200L7.500 42C7.500 20 22 7.500 42 7.500Z" fill="url(#gC1)"/>
  <path d="M27.600 36C28.500 28 33 24.400 40 24.400C46 24.400 52 26.500 55.500 31.200C58 35 62.500 37.500 66.500 35C70.500 32.300 71 27 68.600 22.200C63 15.500 55 13 47.500 14C37 15.500 29 24 27.600 36Z" fill="url(#gC2)"/>
  <path d="M14 68C20 77 31 81 41 79.500C48 78.300 53 74 56.500 68.500C58.500 65.500 57.500 62 55.600 61.600C52.500 67 47 71.100 40.700 71.100C33 71.100 27.400 65 27.400 56.200C27.400 62 22 70 14 68Z" fill="url(#gC3)" opacity="0.850"/>
</svg>

<!-- tooltip -->
<div class="abs" style="left:866px;top:592px;width:119px;height:26px;background:#323232;border:1px solid #4e4e4e;border-radius:4.500px"></div>
<svg class="abs" style="left:916px;top:616px" width="20" height="12" viewBox="0 0 20 12"><path d="M2.500 1.500H17.500L11.200 9.300Q10 10.600 8.800 9.300Z" fill="#323232"/><path d="M3 1.600L8.800 9.300Q10 10.600 11.200 9.300L17 1.600" fill="none" stroke="#4e4e4e" stroke-width="1"/><rect x="3.200" y="0" width="13.600" height="1.700" fill="#323232"/></svg>
<div class="abs" style="left:866px;top:592px;width:119px;height:26px;line-height:26px;text-align:center;font-size:14px;letter-spacing:0.250px;color:#e6e6e6;-webkit-text-stroke:0.250px #e6e6e6;white-space:nowrap">Patch Updater</div>

<!-- 34 Patch Updater -->
<svg class="abs" style="left:856px;top:626px;overflow:visible" width="140" height="142" viewBox="0 0 140 142">
  <defs>
    <linearGradient id="gPfade" gradientUnits="userSpaceOnUse" x1="72" y1="0" x2="120" y2="0"><stop offset="0" stop-color="#000"/><stop offset="0.300" stop-color="#3a3a3a"/><stop offset="0.700" stop-color="#b0b0b0"/><stop offset="1" stop-color="#fff"/></linearGradient>
    <mask id="mP" maskUnits="userSpaceOnUse" x="0" y="0" width="140" height="142"><rect x="0" y="0" width="140" height="60" fill="url(#gPfade)"/><rect x="0" y="59.500" width="140" height="83" fill="#fff"/></mask>
    <linearGradient id="gPa" gradientUnits="userSpaceOnUse" x1="0" y1="8" x2="0" y2="124"><stop offset="0" stop-color="#3e6284"/><stop offset="0.200" stop-color="#4a70a2"/><stop offset="0.450" stop-color="#5072c4"/><stop offset="0.750" stop-color="#4c5cbc"/><stop offset="1" stop-color="#403ea8"/></linearGradient>
    <linearGradient id="gPh" gradientUnits="userSpaceOnUse" x1="98" y1="98" x2="120" y2="122"><stop offset="0" stop-color="#4c5cc4"/><stop offset="0.500" stop-color="#3c3aa4"/><stop offset="1" stop-color="#352e96"/></linearGradient>
    <linearGradient id="gSkyM" x1="0" y1="0" x2="0" y2="1"><stop offset="0" stop-color="#7388c0"/><stop offset="0.200" stop-color="#8c98c4"/><stop offset="0.400" stop-color="#9ea0c0"/><stop offset="0.550" stop-color="#8c90b4"/><stop offset="1" stop-color="#3a2a30"/></linearGradient>
    <linearGradient id="gDune" x1="0.300" y1="0" x2="0.100" y2="1"><stop offset="0" stop-color="#c8924c"/><stop offset="0.400" stop-color="#c07a2a"/><stop offset="0.700" stop-color="#a05c1c"/><stop offset="1" stop-color="#6a340e"/></linearGradient>
    <linearGradient id="gDsh" x1="0" y1="0" x2="0.300" y2="1"><stop offset="0" stop-color="#563222"/><stop offset="0.350" stop-color="#3c2014"/><stop offset="1" stop-color="#1a0e08"/></linearGradient>
    <filter id="fB3" x="-0.200" y="-0.500" width="1.400" height="2"><feGaussianBlur stdDeviation="1.100"/></filter>
    <filter id="fB4" x="-0.100" y="-0.100" width="1.200" height="1.200"><feGaussianBlur stdDeviation="0.450"/></filter>
    <clipPath id="cM"><circle cx="70.300" cy="71" r="31.400"/></clipPath>
    <g id="pArrow">
      <g mask="url(#mP)">
        <path d="M68.170 10.040A61 61 0 0 1 116.340 111.020L106.680 102.620A48.200 48.200 0 0 0 68.620 22.830Z" fill="url(#gPa)"/>
        <path d="M68.370 15.830A55.200 55.200 0 0 1 111.960 107.210" fill="none" stroke="#6a9ae0" stroke-width="5" opacity="0.300"/><path d="M68.560 21.230A49.800 49.800 0 0 1 107.880 103.670" fill="none" stroke="#2e2490" stroke-width="2.200" opacity="0.800"/>
        <path d="M68.170 10.040A61 61 0 0 1 116.340 111.020" fill="none" stroke="#90c0f4" stroke-width="1.500"/>
        <path d="M68.620 22.830A48.200 48.200 0 0 1 106.680 102.620" fill="none" stroke="#94c2f4" stroke-width="1.300"/>
      </g>
      <path d="M116.340 111.020L122.380 115.960L97.120 122.090L99.820 96.030L106.680 102.620Z" fill="url(#gPh)"/>
      <path d="M116.340 111.020L122.380 115.960L97.120 122.090L99.820 96.030L106.680 102.620" fill="none" stroke="#8fbcf2" stroke-width="1.400" stroke-linejoin="miter"/>
    </g>
  </defs>
  <use href="#pArrow"/>
  <use href="#pArrow" transform="rotate(180 70.300 71)"/>
  <!-- Mojave disc -->
  <circle cx="70.300" cy="71" r="34.400" fill="#ebe7f1"/>
  <g clip-path="url(#cM)">
    <rect x="36" y="36" width="70" height="70" fill="url(#gSkyM)"/>
    <g filter="url(#fB3)">
      <path d="M50 45C56 42 64 43.500 70 42.500C76 41.500 82 43 86 45.500C80 47.500 74 46.500 68 48.500C62 50 55 49 50 45Z" fill="#e6a6a4" opacity="0.850"/>
      <path d="M82 50.500C86 49.500 92 50.500 96 53C91 54 86 53.500 82 50.500Z" fill="#dba2a8" opacity="0.700"/>
    </g>
    <g filter="url(#fB4)">
      <path d="M34 69C42 65 54 59 60.500 57.400C66 57.200 74 58.200 79.800 58.600C85 60.500 89 62 93 63.500C97 65.500 100 66.500 108 70V108H34Z" fill="url(#gDsh)"/>
      <path d="M34 69C46 63 54 59 60.500 57.400C66 57.200 74 58.200 79.800 58.600C74 59.500 69 60.800 65.500 62C72 63 79 66 83.800 69.600C85.500 71 86.400 72.500 86.400 73.700C82 74.800 72 75.500 65.500 76.700C61 77.800 58 79 55.400 80.800C52 83 48 86 44.200 87.900L34 93Z" fill="url(#gDune)"/>
      <path d="M86.400 73.700C82 74.800 72 75.500 65.500 76.700C61 77.800 58 79 55.400 80.800" fill="none" stroke="#f2a83e" stroke-width="1.200" opacity="0.800"/>
    </g>
  </g>
</svg>
<!-- 35 Preview -->
<svg class="abs" style="left:990px;top:650px;overflow:visible" width="120" height="110" viewBox="0 0 120 110">
  <defs>
    <filter id="fPeb" x="0" y="0" width="1" height="1" color-interpolation-filters="sRGB"><feTurbulence type="fractalNoise" baseFrequency="0.380" numOctaves="2" seed="4"/><feColorMatrix type="matrix" values="1.600 0 0 0 -0.140  1.350 0 0 0 -0.155  0.800 0 0 0 -0.150  0 0 0 0 1"/></filter>
    <filter id="fSurf" x="0" y="0" width="1" height="1" color-interpolation-filters="sRGB"><feTurbulence type="fractalNoise" baseFrequency="0.090 0.200" numOctaves="2" seed="7"/><feColorMatrix type="matrix" values="0 0 0 0 1  0 0 0 0 1  0 0 0 0 1  2.600 0 0 0 -0.900"/></filter>
    <linearGradient id="gPvSky" x1="0" y1="0" x2="0" y2="1"><stop offset="0" stop-color="#86b0fa"/><stop offset="1" stop-color="#b4cefa"/></linearGradient>
    <linearGradient id="gPvSea" x1="0" y1="0" x2="0" y2="1"><stop offset="0" stop-color="#1a2a80"/><stop offset="0.300" stop-color="#2a46a2"/><stop offset="0.550" stop-color="#4a78c0"/><stop offset="1" stop-color="#8cd0e4"/></linearGradient>
    <linearGradient id="gLoupeB" x1="0" y1="0" x2="1" y2="0"><stop offset="0" stop-color="#a39e95"/><stop offset="0.350" stop-color="#8e897f"/><stop offset="0.750" stop-color="#736f66"/><stop offset="1" stop-color="#57534c"/></linearGradient>
    <linearGradient id="gLens" x1="0" y1="0" x2="0.300" y2="1"><stop offset="0" stop-color="#7c98c0"/><stop offset="0.400" stop-color="#b4c6d8"/><stop offset="0.560" stop-color="#8c7458"/><stop offset="1" stop-color="#5c4832"/></linearGradient>
    <clipPath id="cPv"><rect x="3.400" y="29" width="77.300" height="35.600"/></clipPath>
    <filter id="fB2" x="-0.200" y="-0.200" width="1.400" height="1.400"><feGaussianBlur stdDeviation="1"/></filter>
    <clipPath id="cLens"><ellipse cx="90.500" cy="67.200" rx="17" ry="15.300"/></clipPath>
    <linearGradient id="gLoupeR" x1="0" y1="0" x2="1" y2="1"><stop offset="0" stop-color="#dde1e5"/><stop offset="0.500" stop-color="#b4b8bc"/><stop offset="1" stop-color="#7e8286"/></linearGradient>
    <linearGradient id="gLoupeW" x1="0" y1="0" x2="0" y2="1"><stop offset="0" stop-color="#121212"/><stop offset="0.350" stop-color="#2e2e2e"/><stop offset="1" stop-color="#6a6a6a"/></linearGradient>
  </defs>
  <!-- back photo -->
  <rect x="20" y="8.900" width="84.800" height="52" fill="#fafafa"/>
  <rect x="23.200" y="12.200" width="78.400" height="48" fill="#9a7a42"/>
  <rect x="23.200" y="12.200" width="78.400" height="48" filter="url(#fPeb)" opacity="0.850"/>
  <!-- front photo -->
  <g transform="translate(7.400 27.900) rotate(-8.820)">
    <rect x="0" y="0" width="84.100" height="68" fill="#fbfbfb"/>
    <rect x="3.400" y="3.400" width="77.300" height="25.800" fill="url(#gPvSky)"/>
    <rect x="3.400" y="29" width="77.300" height="35.600" fill="url(#gPvSea)"/>
    <g clip-path="url(#cPv)">
      <path d="M3.400 52C14 48 28 46 42 42.500C56 39.500 70 37.500 80.700 37V58H3.400Z" fill="#e6f3f8" opacity="0.900" filter="url(#fB2)"/>
      <path d="M3.400 55C8 53.500 14 55 17 58.500C14 62 8 64 3.400 64.600Z" fill="#3cc4dc" opacity="0.750" filter="url(#fB2)"/>
      <path d="M36 55.500C42 53.500 50 54 54 57C50 59 42 59 36 55.500Z" fill="#34c0d8" opacity="0.800" filter="url(#fB2)"/>
      <rect x="3.400" y="36" width="77.300" height="28.600" filter="url(#fSurf)" opacity="0.550"/>
    </g>
    <path d="M3.400 41.500C8 40 13 40.500 16 42C19 41.500 22 43 23.500 45C20 47 15 47 10 46.500L3.400 48Z" fill="#4e3e32"/>
    <path d="M33 37C35.500 36 38.500 36.300 40 37.800C38 39 35 39 33 37Z" fill="#4a3a34"/>
    <path d="M10 64.600C14 60 20 57 28 56C34 55.300 40 57 45 59.500C50 58 56 58 60 59.500L61 64.600Z" fill="#7c5e3e"/>
    <path d="M16 62.500C22 59.500 30 58.500 38 60.500M46 61.500C50 60.500 54 60.500 57 61.500" fill="none" stroke="#a88658" stroke-width="1.300"/>
    <path d="M58 50.500C61 49 65 49.300 67 51C68 52.500 66 54 63 54C60 54.500 57 53 58 50.500Z" fill="#5e4a3c"/>
    <path d="M52 55.500C54.500 54.500 57 55 58 56.500C56 57.500 53.500 57.300 52 55.500Z" fill="#5a4434"/>
    <path d="M26.500 52.800C28 52 30 52.300 30.500 53.500C29 54.500 27.200 54.200 26.500 52.800Z" fill="#6a4c28"/>
  </g>
  <!-- loupe -->
  <path d="M69.300 64C69.300 72 70 83 72.500 91C75 98 82 100.600 90.500 100.600C99 100.600 106 98 108.500 91C110.500 83 111.200 72 111.200 64Z" fill="url(#gLoupeB)"/>
  <path d="M70.800 78C74 85.500 81 88.600 90.500 88.600C100 88.600 107 85.500 110 78" fill="none" stroke="#5e5a53" stroke-width="0.900" opacity="0.800"/>
  <circle cx="90.200" cy="65" r="20.900" fill="url(#gLoupeR)"/>
  <circle cx="90.300" cy="65.300" r="19.300" fill="url(#gLoupeW)"/>
  <ellipse cx="90.500" cy="67.200" rx="17.800" ry="16" fill="#c9ced3"/>
  <ellipse cx="90.500" cy="67.200" rx="17" ry="15.300" fill="url(#gLens)"/>
  <g clip-path="url(#cLens)">
    <path d="M73 62C78 57 84 60 90 57C96 54 103 56 108 60L108 70C100 65 93 68 87 70C81 72 76 70 73 67Z" fill="#eef4f8" opacity="0.700"/>
    <path d="M86 53C92 52 100 54 106 62C100 60 94 61 90 58C88 56.500 87 55 86 53Z" fill="#6c6484" opacity="0.700"/>
    <path d="M78 58C80 56 84 55.500 87 56.500C84 58.500 81 59.500 78 58Z" fill="#8a84a0" opacity="0.500"/>
    <path d="M73 76C79 71 88 69.500 96 71C101 72 105 74 108 77V86H73Z" fill="#8a7252"/>
    <path d="M77 77.500C84 73.500 93 73 102 76" fill="none" stroke="#b89e76" stroke-width="1.500"/>
    <path d="M80 80C86 78 94 78 100 80" fill="none" stroke="#a08660" stroke-width="1"/>
    <path d="M73 82C81 80 96 81 108 84V86H73Z" fill="#5e4c3a"/>
  </g>
  <path d="M73.600 71.500A17.400 15.600 0 0 0 107.400 71.500" fill="none" stroke="#eef1f4" stroke-width="0.900" opacity="0.850"/>
</svg>

<!-- 36 Document stack -->
<svg class="abs" style="left:1156px;top:708px;overflow:visible" width="44" height="54" viewBox="0 0 44 54">
  <defs><linearGradient id="gDoc" x1="0" y1="0" x2="0" y2="1"><stop offset="0" stop-color="#f2f2f2"/><stop offset="0.300" stop-color="#ffffff"/><stop offset="1" stop-color="#fdfdfd"/></linearGradient>
  <linearGradient id="gCurl" x1="0" y1="0" x2="1" y2="1"><stop offset="0" stop-color="#ffffff"/><stop offset="1" stop-color="#d8d8d8"/></linearGradient></defs>
  <rect x="3.800" y="8.900" width="34.700" height="23.800" rx="1.500" fill="#1eb0ea"/>
  <path d="M6.500 4H20.500C23.500 4.300 25.500 6 27.500 8.500L35.500 17.500C37 19.500 37.400 21.500 37.400 24V49.900H4.900V5.600Q4.900 4 6.500 4Z" fill="url(#gDoc)"/>
  <path d="M24.500 5.800C26.500 9 27 13.500 26.300 17.800C30 17.200 34 18.500 36.600 21.500C36.300 19.500 35.800 18 34.500 16.500L27.500 8.500C26.700 7.400 25.700 6.500 24.500 5.800Z" fill="url(#gCurl)"/>
  <svg x="9" y="20.600" width="23.200" height="23.200"><use href="#hdd"/></svg>
</svg>

<!-- 37/38 minimized windows -->
<div class="abs" style="left:1205px;top:747px;width:16px;height:11px;background:#0f0f0f;border:1px solid #1c1e20"></div>
<svg class="abs" style="left:1205px;top:747px" width="16" height="11" viewBox="0 0 16 11"><path d="M1.500 1.200H14.500" stroke="#5a6468" stroke-width="0.600"/><rect x="3" y="3.200" width="2" height="1" fill="#9a9a9a"/><rect x="8.800" y="3" width="5.400" height="1.400" fill="#8e8e8e"/><rect x="3" y="5.200" width="3.600" height="1.400" fill="#7e7e7e"/><path d="M1.300 1V10" stroke="#3c4448" stroke-width="0.800"/></svg>
<svg class="abs" style="left:1216px;top:755px" width="5.400" height="5" viewBox="0 0 13.200 12"><rect width="13.200" height="12" fill="url(#gFn)"/><path d="M7.500 0H13.200V12H8.200C7.800 10.300 7.700 8.800 7.800 7.400H5.800C5.900 4.600 6.500 2.200 7.500 0Z" fill="#f1f6fb"/></svg>
<div class="abs" style="left:1223.500px;top:749px;width:15px;height:9px;background:#0f0f0f;border:1px solid #1c1e20"></div>
<svg class="abs" style="left:1223.500px;top:749px" width="15" height="9" viewBox="0 0 15 9"><path d="M1.500 1H14" stroke="#5a6468" stroke-width="0.600"/><g fill="#c8c8c8"><rect x="3.200" y="2.200" width="1.200" height="1.200"/><rect x="5.400" y="2.200" width="1.200" height="1.200"/><rect x="7.600" y="2.200" width="1.200" height="1.200"/><rect x="9.800" y="2.200" width="2.400" height="1.200"/></g><g fill="#6e6e6e"><rect x="5.400" y="4.400" width="1" height="0.800"/><rect x="7.600" y="4.400" width="1" height="0.800"/><rect x="9.800" y="4.400" width="2.800" height="0.800"/><rect x="5.400" y="6.200" width="1" height="1.200"/><rect x="7.600" y="6.200" width="1" height="1.200"/></g><rect x="3" y="5.300" width="1.600" height="1.300" fill="#2a50e0"/></svg>
<svg class="abs" style="left:1233px;top:755px" width="5.400" height="5" viewBox="0 0 13.200 12"><rect width="13.200" height="12" fill="url(#gFn)"/><path d="M7.500 0H13.200V12H8.200C7.800 10.300 7.700 8.800 7.800 7.400H5.800C5.900 4.600 6.500 2.200 7.500 0Z" fill="#f1f6fb"/></svg>
<!-- 39 Trash -->
<svg class="abs" style="left:1242px;top:745px" width="15" height="16" viewBox="0 0 15 16"><defs><linearGradient id="gTr" x1="0" y1="0" x2="1" y2="0"><stop offset="0" stop-color="#3a3f41"/><stop offset="0.500" stop-color="#4a4f52"/><stop offset="1" stop-color="#373c3e"/></linearGradient></defs><path d="M1 2.200C1 1.200 13.200 1.200 13.200 2.200L11.600 14.200C11.400 15.400 3 15.400 2.800 14.200Z" fill="url(#gTr)"/><ellipse cx="7.100" cy="2.200" rx="6.100" ry="0.900" fill="#303436" stroke="#60666a" stroke-width="0.600"/><path d="M4.500 3.500L5.200 14M7.100 3.500V14.500M9.700 3.500L9 14" stroke="#3c4042" stroke-width="0.600" opacity="0.800"/></svg>

</div>
</body>
</html>
